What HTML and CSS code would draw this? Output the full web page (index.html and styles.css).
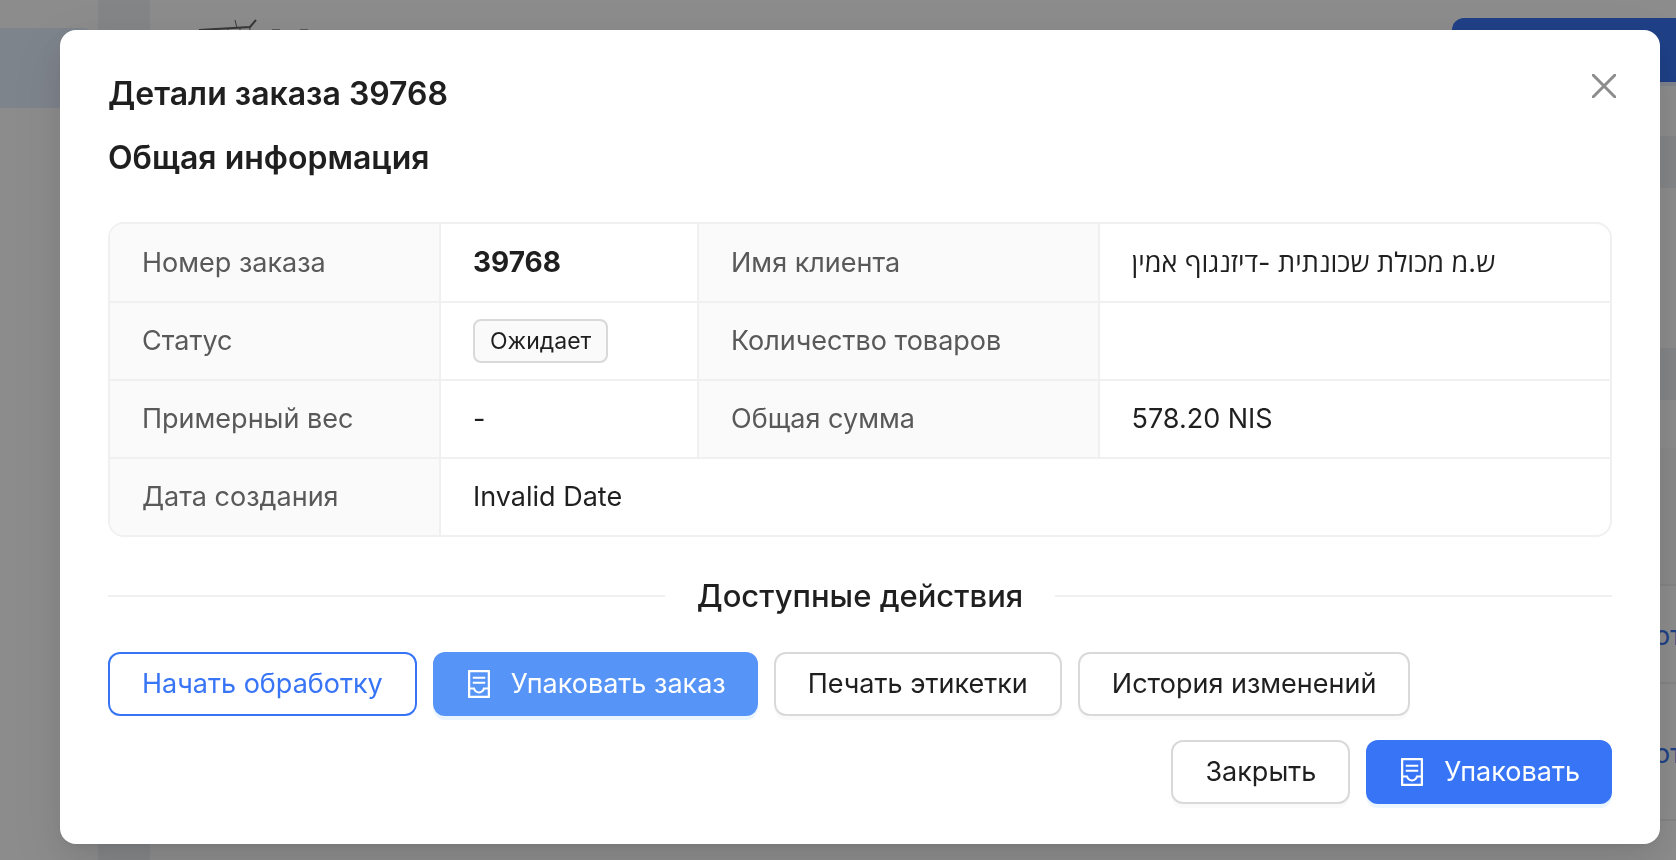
FILE: index.html
```html
<!DOCTYPE html>
<html lang="ru">
<head>
<meta charset="utf-8">
<meta name="viewport" content="width=device-width, initial-scale=1">
<title>Детали заказа 39768</title>
<link rel="stylesheet" href="styles.css">
</head>
<body>
<svg class="defs" aria-hidden="true">
  <symbol id="container" viewBox="0 0 1024 1024">
    <path d="M832 64H192c-17.7 0-32 14.3-32 32v832c0 17.7 14.3 32 32 32h640c17.7 0 32-14.3 32-32V96c0-17.7-14.3-32-32-32zm-40 824H232V687h97.9c11.6 32.8 32 62.3 59.1 84.7 34.5 28.5 78.2 44.3 123 44.3s88.5-15.7 123-44.3c27.1-22.4 47.5-51.9 59.1-84.7H792v201zm0-264H643.6l-5.2 24.7C626.4 708.5 573.2 752 512 752s-114.4-43.5-126.5-103.2l-5.2-24.8H232V136h560v488zM320 341h384c4.400 0 8-3.600 8-8v-48c0-4.400-3.600-8-8-8H320c-4.400 0-8 3.600-8 8v48c0 4.400 3.600 8 8 8zm0 160h384c4.400 0 8-3.600 8-8v-48c0-4.400-3.600-8-8-8H320c-4.400 0-8 3.600-8 8v48c0 4.400 3.600 8 8 8z"/>
  </symbol>
</svg>

<div class="app" aria-hidden="true">
  <aside class="sidebar"><div class="sidebar-item"></div></aside>
  <main class="content">
    <section class="card top">
      <svg class="logo" width="120" height="60" viewBox="0 0 120 60" fill="none" stroke="#666">
        <path stroke-width="2" d="M1 12 52 9 58 2"/>
        <path d="M37 2l2 8M4 13l6 22h40l2-25M12 12l3 20M30 11l1 20M42 10v22"/>
        <path stroke="#444" d="M74 12h8M102 12h8"/>
      </svg>
      <span class="top-action"></span>
    </section>
    <section class="card filters"></section>
    <section class="card orders">
      <div class="row head"></div>
      <div class="row"><span></span><a>от</a></div>
      <div class="row tall"><span></span><a>от</a></div>
      <div class="row last"><i class="ghost-tag"></i></div>
    </section>
  </main>
</div>

<div class="mask">
  <div class="modal" role="dialog" aria-modal="true" aria-labelledby="title">
    <header class="modal-header">
      <h1 id="title">Детали заказа 39768</h1>
      <button class="close" type="button" aria-label="Close">
        <svg width="24" height="24" viewBox="0 0 24 24" fill="none" stroke="currentColor" stroke-width="3" stroke-linecap="round"><path d="M1 1 23 23M23 1 1 23"/></svg>
      </button>
    </header>
    <h2>Общая информация</h2>
    <div class="info">
      <table>
        <colgroup><col class="c1"><col class="c2"><col class="c3"><col></colgroup>
        <tbody>
          <tr><th scope="row">Номер заказа</th><td><strong>39768</strong></td><th scope="row">Имя клиента</th><td>ש.מ מכולת שכונתית -דיזנגוף אמין</td></tr>
          <tr><th scope="row">Статус</th><td><span class="tag">Ожидает</span></td><th scope="row">Количество товаров</th><td></td></tr>
          <tr><th scope="row">Примерный вес</th><td>-</td><th scope="row">Общая сумма</th><td>578.20 NIS</td></tr>
          <tr><th scope="row">Дата создания</th><td colspan="3">Invalid Date</td></tr>
        </tbody>
      </table>
    </div>
    <h3 class="divider">Доступные действия</h3>
    <div class="actions">
      <button class="btn outline" type="button">Начать обработку</button>
      <button class="btn primary soft" type="button"><svg class="icon"><use href="#container"/></svg>Упаковать заказ</button>
      <button class="btn" type="button">Печать этикетки</button>
      <button class="btn" type="button">История изменений</button>
    </div>
    <footer class="actions footer">
      <button class="btn" type="button">Закрыть</button>
      <button class="btn primary" type="button"><svg class="icon"><use href="#container"/></svg>Упаковать</button>
    </footer>
  </div>
</div>
</body>
</html>
```
FILE: styles.css
```css
* { box-sizing: border-box; }

body {
  margin: 0;
  height: 100vh;
  overflow: hidden;
  background: #f0f2f5;
  color: #1f1f1f;
  font-family: Inter, "Open Sans", "DejaVu Sans", sans-serif;
  font-size: 27px;
  line-height: 44px;
}

.defs { position: absolute; width: 0; height: 0; }

/* Page under the dialog */
.app { display: flex; gap: 52px; height: 100vh; }
.sidebar { flex: none; width: 98px; padding-top: 28px; background: #fff; }
.sidebar-item { height: 80px; background: #e6f0ff; border-radius: 0 16px 0 0; }
.content { flex: 1; min-width: 0; display: flex; flex-direction: column; gap: 52px; }
.card { background: #fff; }
.top { flex: none; display: flex; justify-content: space-between; height: 136px; padding: 18px 0 0 48px; }
.top-action { width: 224px; height: 64px; border-radius: 12px 0 0 12px; background: #3875f6; box-shadow: 0 4px 0 #e6f0ff; }
.filters { flex: none; height: 160px; }
.orders { flex: 1; padding: 48px 0 0 48px; overflow: hidden; }
.row { display: grid; grid-template-columns: 1fr 22px; align-items: center; height: 98px; padding-top: 4px; border-bottom: 2px solid #f0f0f0; white-space: nowrap; }
.row a { color: #3875f6; }
.head { height: 138px; background: #fafafa; }
.tall { height: 137px; }
.last { padding: 28px 0 0 410px; }
.ghost-tag { width: 138px; height: 44px; border: 2px solid #d9d9d9; border-radius: 8px; background: #fafafa; }

/* Dialog */
.mask {
  position: fixed;
  inset: 0;
  padding: 30px 16px 16px 60px;
  background: rgba(0, 0, 0, .45);
}
.modal {
  padding: 40px 48px;
  border-radius: 16px;
  background: #fff;
  box-shadow: 0 12px 32px rgba(0, 0, 0, .08), 0 6px 12px -8px rgba(0, 0, 0, .12), 0 18px 56px 16px rgba(0, 0, 0, .05);
}
.modal-header { display: flex; justify-content: space-between; align-items: flex-start; margin-bottom: 16px; }
h1, h2, h3 { margin: 0; font-size: 32px; line-height: 48px; font-weight: 600; }
h2 { margin-bottom: 40px; }
.close {
  display: flex;
  padding: 4px;
  margin-right: -8px;
  border: 0;
  background: none;
  color: #8c8c8c;
}

.info { overflow: hidden; border: 2px solid #f0f0f0; border-radius: 16px; }
table { width: 100%; border-collapse: collapse; table-layout: fixed; }
.c1 { width: 22%; }
.c2 { width: 17.2%; }
.c3 { width: 26.7%; }
th, td { padding: 16px 32px; text-align: left; font-weight: 400; }
th { background: #fafafa; color: #595959; }
tr + tr > * { border-top: 2px solid #f0f0f0; }
th + td, td + th { border-left: 2px solid #f0f0f0; }
strong { font-size: 28px; font-weight: 700; }
.tag {
  display: block;
  width: max-content;
  padding: 0 15px;
  border: 2px solid #d9d9d9;
  border-radius: 8px;
  background: #fafafa;
  font-size: 23px;
  line-height: 40px;
}

.divider { display: flex; align-items: center; gap: 32px; margin: 35px 0 32px; font-size: 31px; font-weight: 500; }
.divider::before, .divider::after { content: ""; flex: 1; height: 2px; background: #f0f0f0; }

.actions { display: flex; flex-wrap: wrap; gap: 16px; }
.footer { justify-content: flex-end; margin-top: 24px; }
.btn {
  display: flex;
  align-items: center;
  gap: 16px;
  height: 64px;
  padding: 0 32px;
  border: 2px solid #d9d9d9;
  border-radius: 12px;
  background: #fff;
  box-shadow: 0 4px 0 rgba(0, 0, 0, .02);
  color: #1f1f1f;
  font: inherit;
}
.outline { border-color: #3875f6; color: #3875f6; box-shadow: none; }
.primary { padding: 0 30px 0 28px; border-color: #3875f6; background: #3875f6; color: #fff; box-shadow: 0 4px 0 #ebf5ff; }
.soft { border-color: #5794f8; background: #5794f8; }
.icon { width: 32px; height: 32px; fill: currentColor; }
```
